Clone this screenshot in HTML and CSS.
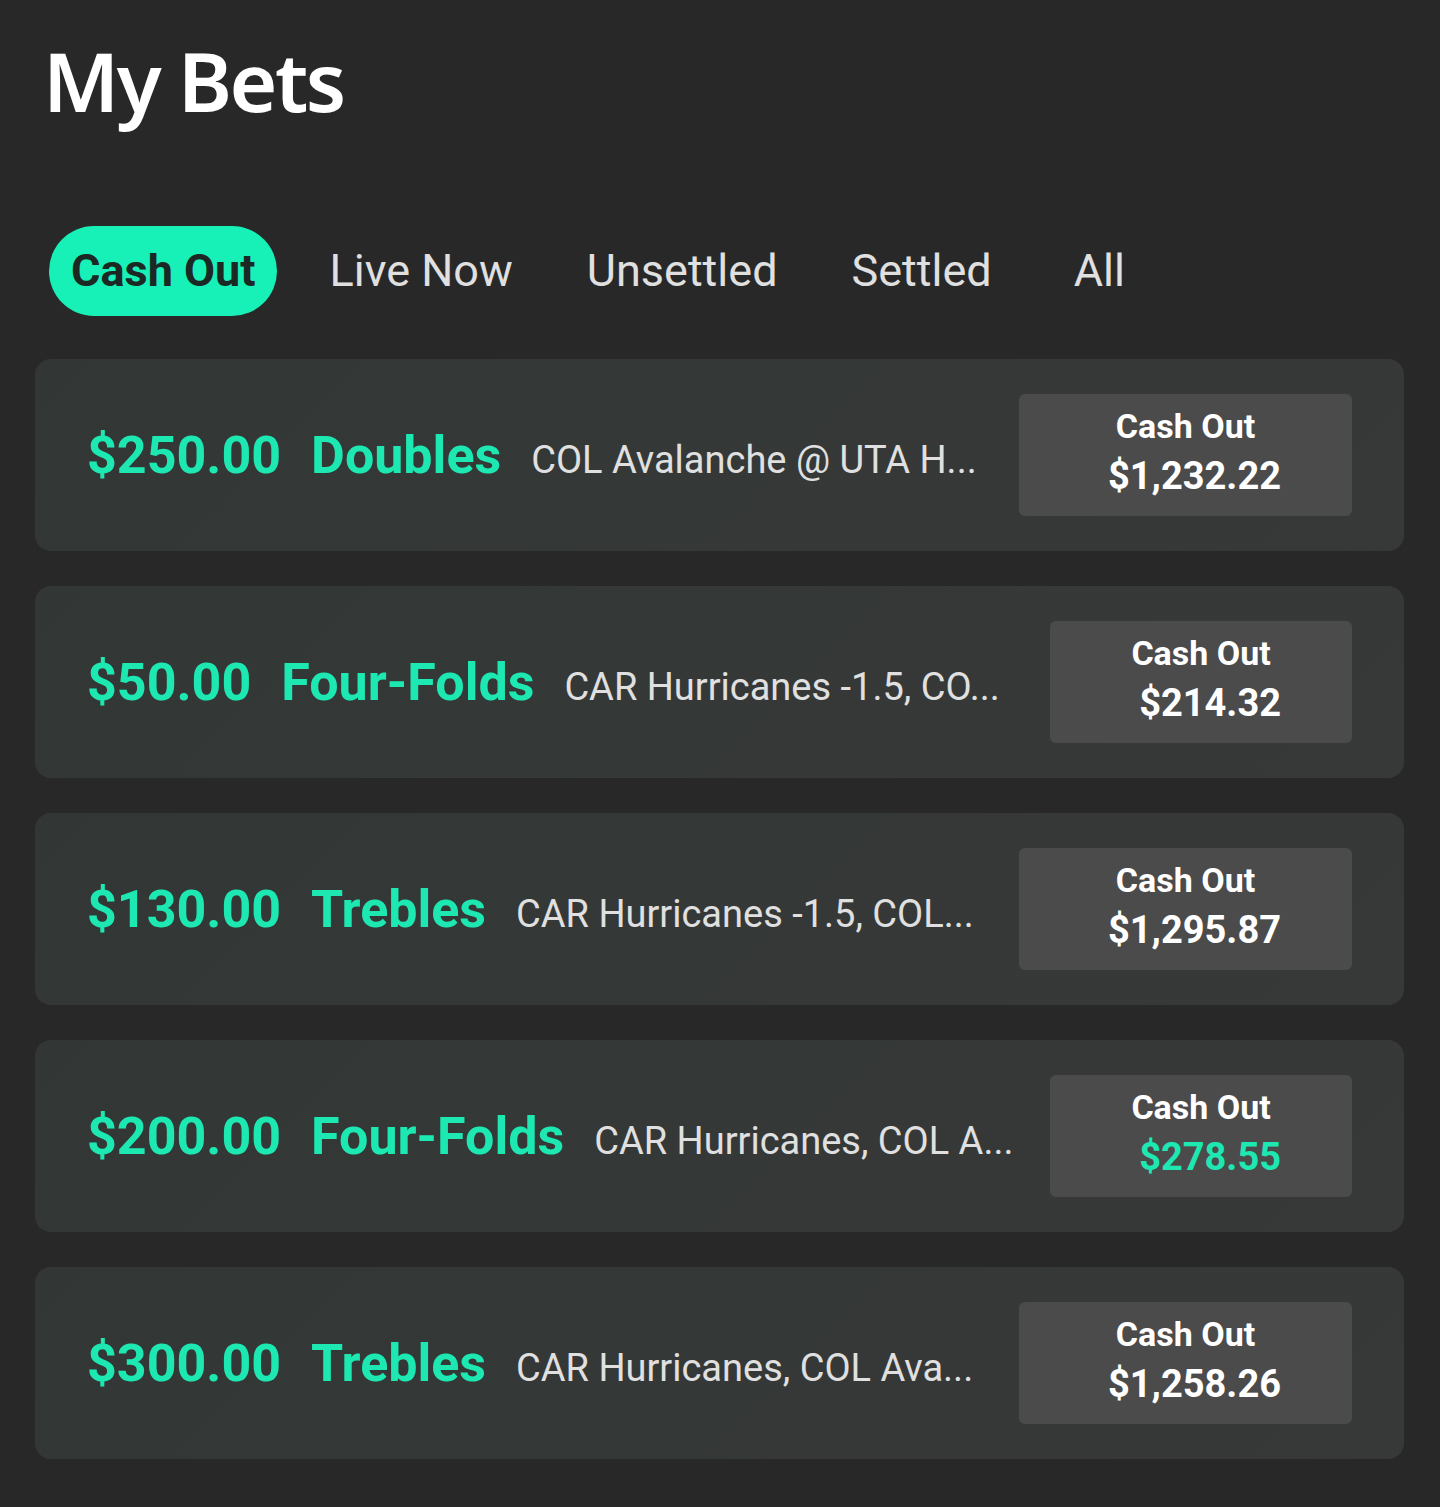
FILE: index.html
```html
<!DOCTYPE html>
<html lang="en">
<head>
    <meta charset="UTF-8">
    <meta name="viewport" content="width=device-width, initial-scale=1.0">
    <title>My Bets</title>
    <link rel="stylesheet" href="styles.css">
</head>
<body>
    <div class="container">
        <h1 class="page-title">My Bets</h1>

        <div class="tabs">
            <button class="tab active">Cash Out</button>
            <button class="tab">Live Now</button>
            <button class="tab">Unsettled</button>
            <button class="tab">Settled</button>
            <button class="tab">All</button>
        </div>

        <div class="bet-list">
            <div class="bet-card">
                <div class="bet-info">
                    <span class="bet-stake">$250.00</span>
                    <span class="bet-type">Doubles</span>
                    <span class="bet-desc">COL Avalanche @ UTA H...</span>
                </div>
                <button class="cashout-button">
                    <span class="cashout-label">Cash Out</span>
                    <span class="cashout-amount">$1,232.22</span>
                </button>
            </div>
            <div class="bet-card">
                <div class="bet-info">
                    <span class="bet-stake">$50.00</span>
                    <span class="bet-type">Four-Folds</span>
                    <span class="bet-desc">CAR Hurricanes -1.5, CO...</span>
                </div>
                <button class="cashout-button">
                    <span class="cashout-label">Cash Out</span>
                    <span class="cashout-amount">$214.32</span>
                </button>
            </div>
            <div class="bet-card">
                <div class="bet-info">
                    <span class="bet-stake">$130.00</span>
                    <span class="bet-type">Trebles</span>
                    <span class="bet-desc">CAR Hurricanes -1.5, COL...</span>
                </div>
                <button class="cashout-button">
                    <span class="cashout-label">Cash Out</span>
                    <span class="cashout-amount">$1,295.87</span>
                </button>
            </div>
            <div class="bet-card">
                <div class="bet-info">
                    <span class="bet-stake">$200.00</span>
                    <span class="bet-type">Four-Folds</span>
                    <span class="bet-desc">CAR Hurricanes, COL A...</span>
                </div>
                <button class="cashout-button">
                    <span class="cashout-label">Cash Out</span>
                    <span class="cashout-amount profit">$278.55</span>
                </button>
            </div>
            <div class="bet-card">
                <div class="bet-info">
                    <span class="bet-stake">$300.00</span>
                    <span class="bet-type">Trebles</span>
                    <span class="bet-desc">CAR Hurricanes, COL Ava...</span>
                </div>
                <button class="cashout-button">
                    <span class="cashout-label">Cash Out</span>
                    <span class="cashout-amount">$1,258.26</span>
                </button>
            </div>
        </div>
    </div>
</body>
</html>
```

FILE: styles.css
```css
:root {
    --bg-color: #282828;
    --card-bg: #323735;
    --card-bg-end: #373938;
    --button-bg: #4b4b4b;
    --accent-color: #1ee8b2;
    --pill-color: #17f0b6;
    --text-color: #ffffff;
    --muted-text: #e0e0e0;
}

body {
    font-family: Roboto, 'Liberation Sans', sans-serif;
    margin: 0;
    background-color: var(--bg-color);
    color: var(--text-color);
}

.container {
    padding: 0 36px 47px 35px;
}

.page-title {
    font-family: 'Noto Sans', 'Open Sans', sans-serif;
    font-size: 82px;
    font-weight: 600;
    line-height: 1;
    letter-spacing: -2.5px;
    margin: 39px 0 0 8px;
}

.tabs {
    display: flex;
    align-items: center;
    gap: 30px;
    margin: 105px 0 0 14px;
}

.tab {
    background: none;
    border: none;
    color: var(--muted-text);
    font-family: inherit;
    font-size: 45px;
    font-weight: 400;
    line-height: 54px;
    padding: 18px 22px;
    border-radius: 45px;
    cursor: pointer;
}

.tab:last-child {
    margin-left: 8px;
}

.tab.active {
    background: var(--pill-color);
    color: #1c2823;
    font-weight: 700;
}

.bet-list {
    display: flex;
    flex-direction: column;
    gap: 35px;
    margin-top: 43px;
}

.bet-card {
    display: flex;
    align-items: center;
    justify-content: space-between;
    gap: 24px;
    padding: 35px 52px;
    border-radius: 16px;
    background: linear-gradient(135deg, var(--card-bg), var(--card-bg-end));
}

.bet-info {
    display: flex;
    align-items: baseline;
    gap: 30px;
    white-space: nowrap;
}

.bet-stake,
.bet-type {
    color: var(--accent-color);
    font-size: 52px;
    font-weight: 700;
}

.bet-desc {
    color: var(--muted-text);
    font-size: 38px;
}

.cashout-button {
    flex-shrink: 0;
    display: flex;
    flex-direction: column;
    align-items: center;
    gap: 6px;
    background: var(--button-bg);
    border: none;
    border-radius: 6px;
    padding: 11px 71px 16px;
    font-family: inherit;
    color: var(--text-color);
    cursor: pointer;
}

.cashout-label {
    font-size: 34px;
    font-weight: 700;
    line-height: 42px;
}

.cashout-amount {
    font-size: 38px;
    font-weight: 700;
    line-height: 47px;
    padding-left: 18px;
}

.cashout-amount.profit {
    color: var(--accent-color);
}
```
